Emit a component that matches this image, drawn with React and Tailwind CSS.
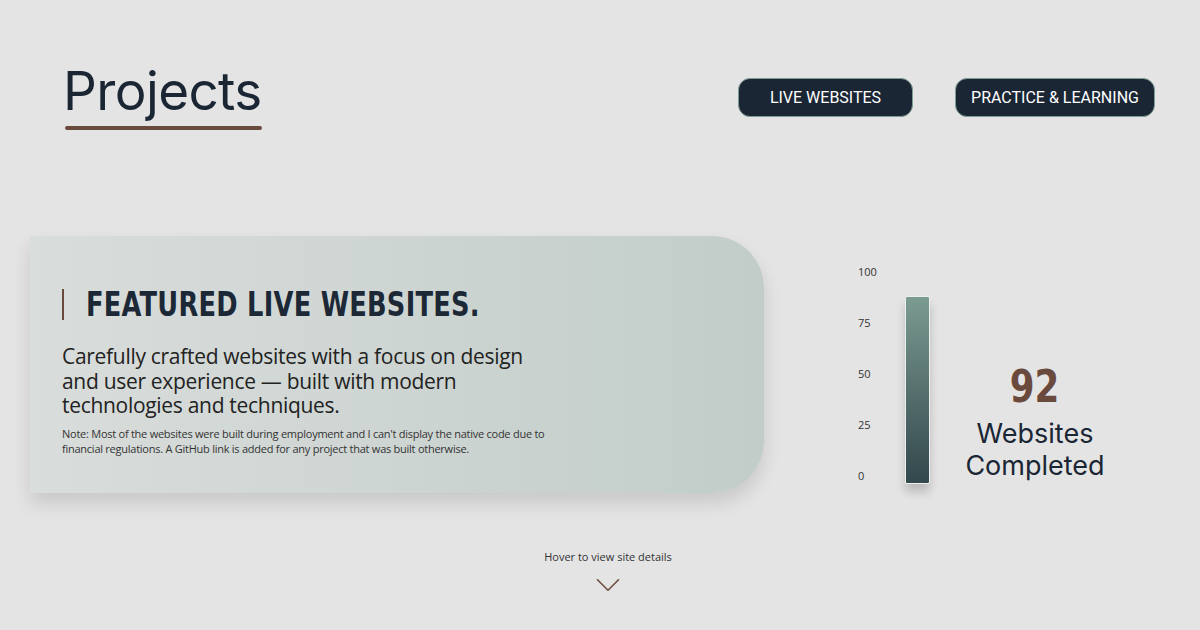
import { ChevronDown } from 'lucide-react';

const TICKS = ['100', '75', '50', '25', '0'];

const App = () => {
    return (
        <div className="w-[1200px] h-[630px] bg-[#e4e4e4] overflow-hidden font-['Inter',sans-serif] text-[#1a2634]">
            {/* Header */}
            <div className="flex items-start justify-between pl-[63px] pr-[45px] pt-[60px]">
                <div className="flex flex-col">
                    <h1 className="text-[53px] leading-[62px] font-normal tracking-[-0.6px] text-[#1a2634]">Projects</h1>
                    <div className="mt-[4px] ml-[2px] h-[4px] w-[197px] rounded-full bg-[#6b4a3e]" />
                </div>
                <div className="flex gap-[42px] mt-[18px]">
                    <button className="w-[175px] h-[39px] rounded-[12px] bg-[#1a2634] border border-[#7d9c94] text-white text-[16px] font-['Roboto',sans-serif]">
                        LIVE WEBSITES
                    </button>
                    <button className="w-[200px] h-[39px] rounded-[12px] bg-[#1a2634] border border-[#7d9c94] text-white text-[16px] font-['Roboto',sans-serif]">
                        PRACTICE &amp; LEARNING
                    </button>
                </div>
            </div>

            {/* Main row */}
            <div className="flex items-start mt-[106px] pl-[30px]">
                <div className="w-[734px] h-[257px] rounded-r-[52px] bg-gradient-to-r from-[#d9dddb] to-[#c2cdc9] shadow-[0_10px_18px_rgba(0,0,0,0.12)] pl-[32px] pt-[50px]">
                    <div className="flex items-center gap-[22px]">
                        <div className="w-[2px] h-[31px] bg-[#6b4a3e]" />
                        <h2 className="inline-block origin-left scale-x-[0.84] whitespace-nowrap text-[34px] leading-[36px] font-bold tracking-[0.3px] font-['DejaVu_Sans_Condensed','Roboto',sans-serif] text-[#1c2836]">
                            FEATURED LIVE WEBSITES.
                        </h2>
                    </div>
                    <p className="mt-[22px] w-[470px] text-[21px] leading-[24.5px] text-[#222] font-['Open_Sans',sans-serif] tracking-[-0.3px]">
                        Carefully crafted websites with a focus on design and user experience — built with modern technologies and techniques.
                    </p>
                    <p className="mt-[8px] w-[490px] text-[11px] leading-[15px] text-[#333] font-['Open_Sans',sans-serif] tracking-[-0.25px]">
                        Note: Most of the websites were built during employment and I can't display the native code due to financial regulations. A GitHub link is added for any project that was built otherwise.
                    </p>
                </div>

                {/* Chart */}
                <div className="flex items-start ml-[94px] mt-[29px]">
                    <div className="flex flex-col gap-[37px] w-[47px] text-[11px] leading-[14px] text-[#333] font-['Open_Sans',sans-serif]">
                        {TICKS.map((t) => <span key={t}>{t}</span>)}
                    </div>
                    <div className="mt-[31px] w-[25px] h-[188px] rounded-[2px] border border-[#eef0ef] bg-gradient-to-b from-[#7c9b91] to-[#33484d] shadow-[0_8px_10px_rgba(0,0,0,0.18)]" />
                    <div className="ml-[30px] mt-[100px] w-[150px] flex flex-col items-center">
                        <span className="inline-block scale-x-[0.9] text-[44px] leading-[44px] font-bold text-[#6b4a3e] font-['DejaVu_Sans_Condensed','Roboto',sans-serif]">92</span>
                        <span className="mt-[9px] text-[27px] leading-[32px] text-center text-[#1a2634]">Websites<br />Completed</span>
                    </div>
                </div>
            </div>

            {/* Hover hint */}
            <div className="flex flex-col items-center mt-[57px] ml-[16px]">
                <span className="text-[11px] leading-[14px] text-[#333] font-['Open_Sans',sans-serif]">Hover to view site details</span>
                <ChevronDown className="mt-0 w-[42px] h-[42px] text-[#6b4a3e]" strokeWidth={0.9} />
            </div>
        </div>
    );
};

export default App;
